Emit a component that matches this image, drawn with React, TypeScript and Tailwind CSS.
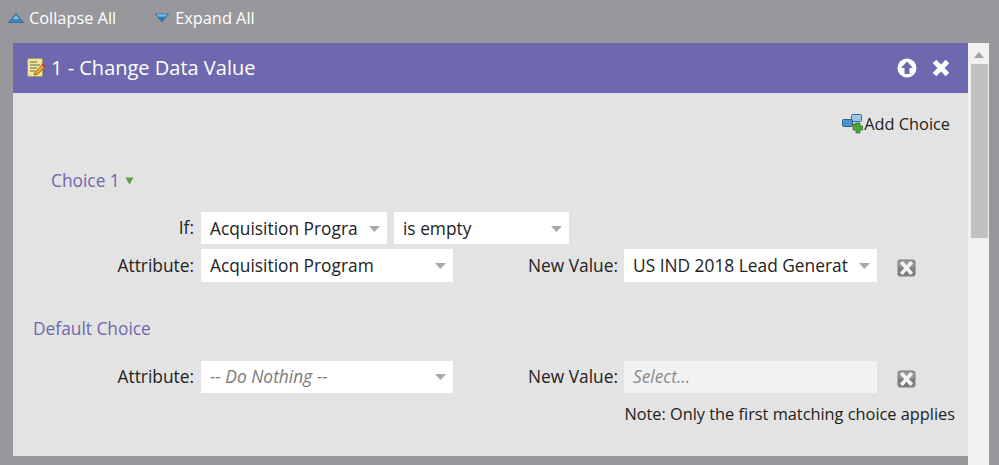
import React from 'react';

interface SelectBoxProps {
  value: string;
  width: string;
  height?: string;
  muted?: boolean;
}

function SelectBox({ value, width, height = 'h-[32px]', muted = false }: SelectBoxProps) {
  return (
    <div className={`${width} ${height} bg-white flex items-center pl-[9px] pr-[7px] shrink-0`}>
      <span
        className={`flex-1 overflow-hidden whitespace-nowrap text-[17.33px] ${
          muted ? 'italic text-[#7a7a7a]' : 'text-[#222]'
        }`}
      >
        {value}
      </span>
      <svg className="w-[11px] h-[6px] ml-[11px] shrink-0" viewBox="0 0 11 6">
        <path d="M0 0h11L5.5 6z" fill="#a8a8a8" />
      </svg>
    </div>
  );
}

function Label({ text, className }: { text: string; className: string }) {
  return <span className={`${className} text-right text-[17.33px] text-[#222] shrink-0`}>{text}</span>;
}

function DeleteIcon() {
  return (
    <svg className="w-[19px] h-[18px] shrink-0" viewBox="0 0 19 18">
      <rect x="0.5" y="0.5" width="18" height="17" rx="3" fill="#7d7d7d" />
      <rect x="1.5" y="1.5" width="16" height="7" rx="2" fill="#9a9a9a" />
      <path d="M5.5 4.5l8 9M13.5 4.5l-8 9" stroke="#f4f4f4" strokeWidth="3.6" strokeLinecap="square" />
    </svg>
  );
}

function Triangle({ up }: { up?: boolean }) {
  return (
    <svg className="w-[16px] h-[10px] shrink-0" viewBox="0 0 16 10">
      {up ? (
        <>
          <path d="M8 .5L15.5 9.5H.5z" fill="#3f87bb" />
          <path d="M8 .5L15.5 9.5H.5z" fill="none" stroke="#2a6a9c" strokeWidth="0.8" />
          <path d="M8 2.5L11 6H5z" fill="#8cc4e6" />
        </>
      ) : (
        <>
          <path d="M.5 .5H15.5L8 9.5z" fill="#2f78ad" />
          <path d="M2.5 1.2H13.5L11.5 3.8H4.5z" fill="#7db9df" />
        </>
      )}
    </svg>
  );
}

function NoteIcon() {
  return (
    <svg className="w-[19px] h-[20px] shrink-0" viewBox="0 0 19 20">
      <rect x="0.5" y="0.5" width="15" height="18" rx="1.5" fill="#efe49a" stroke="#a89e62" />
      <path d="M3 4h7M3 7h10M3 10h7M3 13h5" stroke="#6b6a4a" strokeWidth="1.2" />
      <path d="M7 17l1-3 7-7 2.5 2.5-7 7z" fill="#e3a52c" stroke="#6c4c1c" strokeWidth="0.6" />
      <path d="M14.5 6.5l1.5-1.5 2.5 2.5-1.5 1.5z" fill="#c2403a" />
    </svg>
  );
}

function AddChoiceIcon() {
  return (
    <svg className="w-[21px] h-[20px] shrink-0" viewBox="0 0 21 20">
      <rect x="9.5" y="0.5" width="10" height="7" rx="1" fill="#9cc8e6" stroke="#2f6f9f" />
      <rect x="0.5" y="5.5" width="10" height="7" rx="1" fill="#4c94c8" stroke="#27608c" />
      <path d="M14 8v3" stroke="#2f6f9f" fill="none" />
      <path d="M11 10h4v-1h3v3h3v4h-3v3h-4v-3h-3v-4h0z" fill="#4fa53a" stroke="#2a6b20" strokeWidth="0.7" />
    </svg>
  );
}

export default function App() {
  return (
    <div className="w-[999px] h-[465px] overflow-hidden bg-[#98979c] font-['Open_Sans',sans-serif]">
      {/* top links */}
      <div className="h-[43px] flex items-start pt-[7px] pl-[8px] text-[16.33px] leading-[22px] text-white">
        <div className="flex items-center gap-[5px]">
          <Triangle up />
          <span>Collapse All</span>
        </div>
        <div className="flex items-center gap-[5px] ml-[38px]">
          <Triangle />
          <span>Expand All</span>
        </div>
      </div>

      <div className="flex pl-[13px] h-[422px]">
        <div className="w-[955px] h-[413px] flex flex-col bg-[#e3e3e3]">
          <div className="h-[50px] bg-[#6e68ae] flex items-center pl-[14px] pr-[18px] text-white shrink-0">
            <NoteIcon />
            <span className="ml-[5px] text-[20px]">1 - Change Data Value</span>
            <svg className="w-[20px] h-[20px] ml-auto" viewBox="0 0 20 20">
              <circle cx="10" cy="10" r="9.5" fill="#fff" />
              <path d="M10 3.5L16 10h-3.5v6h-5v-6H4z" fill="#6e68ae" />
            </svg>
            <svg className="w-[18px] h-[18px] ml-[15px]" viewBox="0 0 18 18">
              <path d="M2.5 2.5l13 13M15.5 2.5l-13 13" stroke="#fff" strokeWidth="5" />
            </svg>
          </div>

          <div className="flex-1 flex flex-col pt-[20px]">
            <div className="flex justify-end items-center h-[22px] pr-[18px] text-[#222]">
              <AddChoiceIcon />
              <span className="text-[16.33px] ml-[1px]">Add Choice</span>
            </div>

            <div className="flex items-center gap-[5px] pl-[38px] mt-[34px] h-[24px]">
              <span className="text-[17.33px] text-[#6e68ae]">Choice 1</span>
              <svg className="w-[9px] h-[8px]" viewBox="0 0 9 8">
                <path d="M.5 .5h8L4.5 7.5z" fill="#5aa13f" />
              </svg>
            </div>

            <div className="flex items-center mt-[19px]">
              <Label text="If:" className="w-[181px] mr-[7px]" />
              <SelectBox value="Acquisition Program" width="w-[186px]" height="h-[32px] pt-[1px]" />
              <div className="w-[7px]" />
              <SelectBox value="is empty" width="w-[175px]" height="h-[32px] pt-[1px]" />
            </div>

            <div className="flex items-center mt-[5px]">
              <Label text="Attribute:" className="w-[181px] mr-[7px]" />
              <SelectBox value="Acquisition Program" width="w-[252px]" height="h-[33px]" />
              <Label text="New Value:" className="w-[165px] mr-[6px]" />
              <SelectBox value="US IND 2018 Lead Generation" width="w-[253px]" height="h-[33px]" />
              <div className="ml-[20px] mt-[4px]">
                <DeleteIcon />
              </div>
            </div>

            <div className="pl-[20px] mt-[35px] h-[24px] flex items-center">
              <span className="text-[17.33px] text-[#6e68ae]">Default Choice</span>
            </div>

            <div className="flex items-center mt-[20px]">
              <Label text="Attribute:" className="w-[181px] mr-[7px]" />
              <SelectBox value="-- Do Nothing --" width="w-[252px]" muted />
              <Label text="New Value:" className="w-[165px] mr-[6px]" />
              <div className="w-[253px] h-[32px] bg-[#f2f2f2] flex items-center pl-[9px] shrink-0">
                <span className="text-[17.33px] italic text-[#8a8a8a]">Select...</span>
              </div>
              <div className="ml-[20px] mt-[4px]">
                <DeleteIcon />
              </div>
            </div>

            <div className="mt-[10px] pr-[13px] text-right text-[16.33px] leading-[22px] text-[#222]">
              Note: Only the first matching choice applies
            </div>
          </div>
        </div>

        {/* scrollbar */}
        <div className="w-[21px] h-[422px] bg-[#f1f1f1] flex flex-col items-center shrink-0">
          <svg className="w-[10px] h-[6px] mt-[9px] shrink-0" viewBox="0 0 10 6">
            <path d="M5 0l5 6H0z" fill="#a3a3a3" />
          </svg>
          <div className="w-[17px] h-[174px] mt-[6px] ml-[1px] bg-[#c1c1c1]" />
        </div>
      </div>
    </div>
  );
}
